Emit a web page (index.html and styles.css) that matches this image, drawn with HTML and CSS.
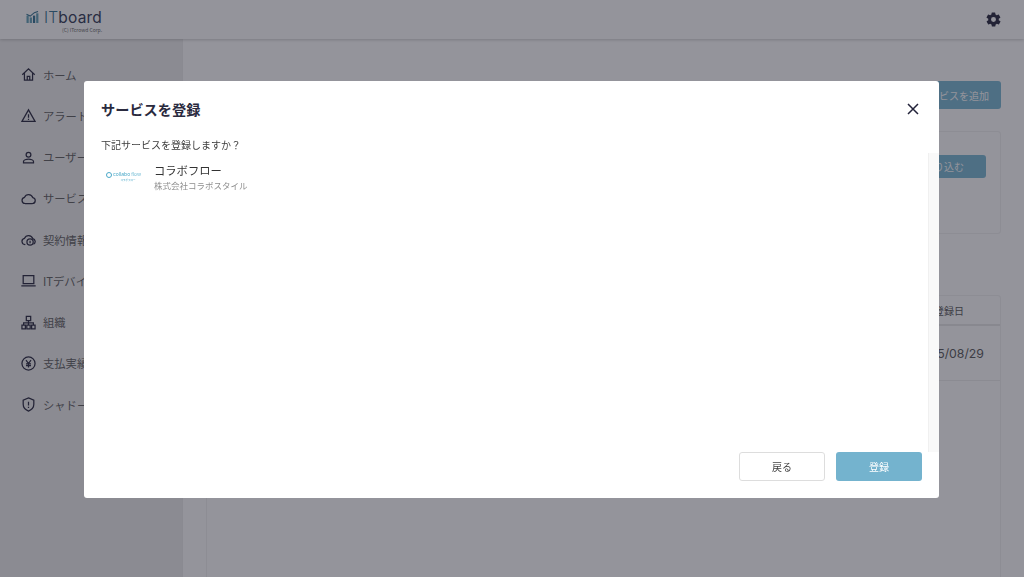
FILE: index.html
```html
<!DOCTYPE html>
<html lang="ja">
<head>
  <meta charset="UTF-8">
  <title>ITboard</title>
  <link rel="stylesheet" href="styles.css">
</head>
<body>
  <header class="topbar">
    <div class="logo">
      <svg class="logo-mark" width="13" height="12" viewBox="0 0 14 13">
        <rect x="0.5" y="5" width="2.400" height="8" fill="#5f9fb5"/>
        <rect x="4" y="7" width="2.400" height="6" fill="#5f9fb5"/>
        <rect x="7.500" y="5" width="2.400" height="8" fill="#2f6f8f"/>
        <rect x="11" y="2.500" width="2.400" height="10.500" fill="#5f9fb5"/>
        <path d="M0.500 3.500 L4.500 5.500 L9 1.800 L13 0.500" fill="none" stroke="#2f6f8f" stroke-width="1.200"/>
      </svg>
      <div class="logo-text">
        <div class="logo-name"><span class="logo-it">IT</span>board</div>
        <div class="logo-copy">(C) ITcrowd Corp.</div>
      </div>
    </div>
    <svg class="gear" width="17" height="17" viewBox="0 0 24 24"><path fill="#23233a" d="M19.400 13a7.600 7.600 0 0 0 0-2l2.100-1.600a.5.5 0 0 0 .1-.6l-2-3.500a.5.5 0 0 0-.6-.2l-2.500 1a7.300 7.300 0 0 0-1.700-1l-.4-2.700a.5.5 0 0 0-.5-.4h-4a.5.5 0 0 0-.5.4l-.4 2.700a7.300 7.300 0 0 0-1.700 1l-2.500-1a.5.5 0 0 0-.6.2l-2 3.500a.5.5 0 0 0 .1.6L4.600 11a7.600 7.600 0 0 0 0 2l-2.100 1.600a.5.5 0 0 0-.1.6l2 3.500a.5.5 0 0 0 .6.2l2.500-1a7.300 7.300 0 0 0 1.700 1l.4 2.700a.5.5 0 0 0 .5.4h4a.5.5 0 0 0 .5-.4l.4-2.700a7.300 7.300 0 0 0 1.700-1l2.500 1a.5.5 0 0 0 .6-.2l2-3.500a.5.5 0 0 0-.1-.6zM12 15.500a3.500 3.500 0 1 1 0-7 3.500 3.500 0 0 1 0 7z"/></svg>
  </header>

  <div class="layout">
    <nav class="sidebar">
      <a class="nav-item">
        <svg class="nav-icon" viewBox="0 0 24 24"><path d="M2 12.500 12 3l10 9.500M5.500 10v11h13V10M10 21v-6h4v6"/></svg>ホーム
      </a>
      <a class="nav-item">
        <svg class="nav-icon" viewBox="0 0 24 24"><path d="M12 3 1.500 21.500h21zM12 10v5.500M12 17v2"/></svg>アラート
      </a>
      <a class="nav-item">
        <svg class="nav-icon" viewBox="0 0 24 24"><circle cx="12" cy="7.500" r="3.800"/><path d="M4 20.500v-2c0-2.500 4.500-4 8-4s8 1.500 8 4v2z"/></svg>ユーザー
      </a>
      <a class="nav-item">
        <svg class="nav-icon" viewBox="0 0 24 24"><path d="M6.500 20a5 5 0 0 1-.8-9.900A7 7 0 0 1 18.800 10.500 4.800 4.800 0 0 1 18.500 20z"/></svg>サービス
      </a>
      <a class="nav-item">
        <svg class="nav-icon" viewBox="0 0 24 24"><path d="M7 20a5 5 0 0 1-1.300-9.900A7 7 0 0 1 18.800 10.500 4.800 4.800 0 0 1 20 19.500"/><circle cx="14.500" cy="16" r="5"/><path d="M14.500 14v4"/></svg>契約情報
      </a>
      <a class="nav-item">
        <svg class="nav-icon" viewBox="0 0 24 24"><path d="M3.500 4h17v13h-17zM0.500 20.500h23"/></svg>ITデバイス
      </a>
      <a class="nav-item">
        <svg class="nav-icon" viewBox="0 0 24 24"><path d="M8.500 2h7v7h-7zM1.500 16h5.500v6H1.500zM9.300 16h5.400v6H9.300zM17 16h5.500v6H17zM12 9v7M4.200 16v-3.500h15.600V16"/></svg>組織
      </a>
      <a class="nav-item">
        <svg class="nav-icon" viewBox="0 0 24 24"><circle cx="12" cy="12" r="10.500"/><path d="M8 6.500l4 5.500 4-5.500M12 12v6.500M8 12.500h8M8 15.500h8"/></svg>支払実績
      </a>
      <a class="nav-item">
        <svg class="nav-icon" viewBox="0 0 24 24"><path d="M12 1.500 20.500 5v6.500c0 5.500-3.800 9-8.500 11-4.700-2-8.500-5.500-8.500-11V5zM12 7.500v6M12 15.500v2"/></svg>シャドーIT
      </a>
    </nav>

    <main class="content">
      <div class="content-head">
        <h1 class="page-title">サービス</h1>
        <button class="primary add-btn">サービスを追加</button>
      </div>
      <section class="filter-card">
        <button class="primary filter-btn">絞り込む</button>
      </section>
      <section class="table">
        <div class="table-head"><span>登録日</span></div>
        <div class="table-row"><span>2025/08/29</span></div>
      </section>
    </main>
  </div>

  <div class="overlay">
    <div class="modal">
      <div class="modal-head">
        <h2 class="modal-title">サービスを登録</h2>
        <svg class="close" width="12" height="12" viewBox="0 0 12 12"><path d="M1 1 11 11M11 1 1 11"/></svg>
      </div>
      <p class="modal-lead">下記サービスを登録しますか？</p>
      <div class="modal-body">
        <div class="service-list">
          <div class="service">
            <div class="service-logo">
              <div class="service-logo-top"><span class="ring"></span>collabo<span class="thin">flow</span></div>
              <div class="service-logo-sub">コラボフロー</div>
            </div>
            <div>
              <div class="service-name">コラボフロー</div>
              <div class="service-org">株式会社コラボスタイル</div>
            </div>
          </div>
        </div>
        <div class="scroll-track"></div>
      </div>
      <div class="modal-foot">
        <button class="btn back">戻る</button>
        <button class="btn submit">登録</button>
      </div>
    </div>
  </div>
</body>
</html>
```

FILE: styles.css
```css
* {
  box-sizing: border-box;
  margin: 0;
}
html, body {
  height: 577px;
  overflow: hidden;
}
body {
  font-family: "Noto Sans CJK JP", "Noto Sans", sans-serif;
  background: #fff;
  color: #23233a;
}
.topbar {
  height: 39px;
  display: flex;
  justify-content: space-between;
  align-items: center;
  padding: 0 22px 0 26px;
  background: #fff;
  box-shadow: 0 1px 3px rgba(0, 0, 0, 0.2);
  position: relative;
}
.logo {
  display: flex;
  align-items: flex-start;
  gap: 5px;
  padding-top: 3px;
}
.logo-mark {
  margin-top: 2px;
}
.logo-name {
  font-family: Inter, sans-serif;
  font-size: 15.500px;
  line-height: 18px;
  letter-spacing: 0.2px;
  color: #2d3552;
}
.logo-it {
  font-weight: 300;
  color: #2f6f8f;
}
.logo-copy {
  font-size: 5px;
  line-height: 6px;
  text-align: right;
  color: #666;
  white-space: nowrap;
}
.layout {
  display: flex;
  height: 538px;
}
.sidebar {
  width: 183px;
  flex-shrink: 0;
  padding-top: 15px;
  background: #eeeeee;
  border-right: 1px solid #ebebeb;
}
.nav-item {
  height: 41.250px;
  display: flex;
  align-items: center;
  gap: 7px;
  padding-left: 21px;
  font-size: 11.300px;
  color: #5c5c5c;
  white-space: nowrap;
}
.nav-icon {
  width: 15px;
  height: 15px;
  flex-shrink: 0;
  fill: none;
  stroke: #23233a;
  stroke-width: 2;
}
.content {
  flex: 1;
  padding: 42px 23px 0;
}
.content-head {
  display: flex;
  justify-content: space-between;
  align-items: center;
  height: 28px;
}
.page-title {
  font-size: 15px;
  font-weight: 700;
}
.primary {
  border: 0;
  border-radius: 3px;
  background: #76b6d2;
  color: #fff;
  font-family: inherit;
  font-size: 10px;
}
.add-btn {
  width: 94px;
  height: 28px;
}
.filter-card {
  height: 103px;
  margin-top: 22px;
  padding: 23px 14px 0;
  display: flex;
  justify-content: flex-end;
  align-items: flex-start;
  background: #fff;
  border: 1px solid #f1f1f1;
  border-radius: 3px;
}
.filter-btn {
  width: 84px;
  height: 23px;
}
.table {
  margin-top: 61px;
  height: 300px;
  border: 1px solid #f1f1f1;
  border-radius: 3px;
}
.table-head {
  height: 30px;
  display: flex;
  justify-content: flex-end;
  align-items: center;
  padding-right: 36px;
  font-size: 10px;
  color: #555;
  border-bottom: 2px solid #e8e8e8;
}
.table-row {
  height: 55px;
  display: flex;
  justify-content: flex-end;
  align-items: center;
  padding-right: 16px;
  font-family: Inter, sans-serif;
  font-size: 12.300px;
  color: #555;
  border-bottom: 1px solid #eee;
}
.overlay {
  position: fixed;
  inset: 0;
  display: flex;
  justify-content: center;
  align-items: flex-start;
  padding-top: 81px;
  background: rgba(36, 36, 52, 0.49);
}
.modal {
  width: 855px;
  height: 417px;
  display: flex;
  flex-direction: column;
  margin-right: 1px;
  background: #fff;
  border-radius: 3px;
}
.modal-head {
  display: flex;
  justify-content: space-between;
  align-items: center;
  padding: 10px 20px 0 17px;
  height: 46px;
}
.modal-title {
  font-size: 14.200px;
  font-weight: 700;
  color: #2a2a3e;
}
.close {
  fill: none;
  stroke: #23233a;
  stroke-width: 1.500;
}
.modal-lead {
  padding: 10px 17px 0;
  height: 26px;
  font-size: 10px;
  line-height: 15px;
  color: #3c3c3c;
}
.modal-body {
  flex: 1;
  display: flex;
  min-height: 0;
}
.service-list {
  flex: 1;
  padding: 6px 0 0 22px;
}
.service {
  display: flex;
  align-items: center;
  gap: 12px;
  height: 35px;
}
.service-logo {
  width: 36px;
  text-align: center;
  color: #4aa8c8;
}
.service-logo-top {
  display: flex;
  align-items: center;
  gap: 1px;
  font-family: Inter, sans-serif;
  font-size: 5px;
  line-height: 7px;
  white-space: nowrap;
}
.ring {
  width: 6px;
  height: 6px;
  border: 1px solid #4aa8c8;
  border-radius: 50%;
}
.thin {
  font-weight: 300;
}
.service-logo-sub {
  font-size: 2.500px;
  line-height: 4px;
  padding-left: 8px;
}
.service-name {
  font-size: 11.300px;
  line-height: 16px;
  color: #333;
}
.service-org {
  font-size: 8.500px;
  line-height: 14px;
  color: #8f8f8f;
}
.scroll-track {
  width: 11px;
  background: #f9f9f9;
  border-left: 1px solid #f0f0f0;
}
.modal-foot {
  height: 46px;
  display: flex;
  justify-content: flex-end;
  gap: 11px;
  padding-right: 17px;
}
.btn {
  width: 86px;
  height: 29px;
  border-radius: 3px;
  font-family: inherit;
  font-size: 10px;
}
.back {
  background: #fff;
  border: 1px solid #ddd;
  color: #444;
}
.submit {
  background: #74b3ce;
  border: 0;
  color: #fff;
}
```
